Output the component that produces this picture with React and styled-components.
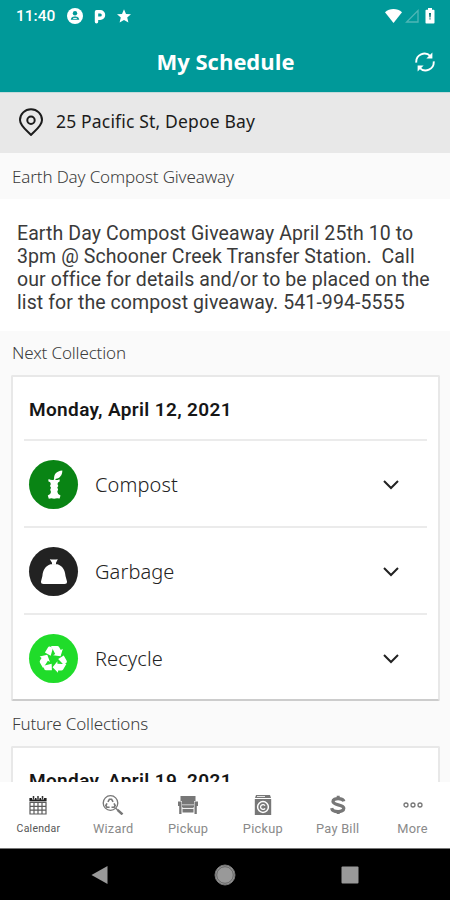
import React, { useState } from "react";
import styled, { createGlobalStyle } from "styled-components";

const GlobalStyle = createGlobalStyle`
  * {
    box-sizing: border-box;
  }
  body {
    margin: 0;
    background: #fafafa;
    font-family: "Noto Sans", "Open Sans", sans-serif;
  }
  svg {
    display: block;
  }
`;

const Screen = styled.div`
  width: 450px;
  height: 900px;
  display: flex;
  flex-direction: column;
  overflow: hidden;
  background: #fafafa;
`;

const StatusBar = styled.div`
  height: 32px;
  flex: none;
  display: flex;
  align-items: center;
  justify-content: space-between;
  padding: 0 15px 0 16px;
  background: #009999;
  color: #fff;
`;

const StatusGroup = styled.div`
  display: flex;
  align-items: center;
  gap: ${(props) => props.$gap};
`;

const Clock = styled.span`
  font-family: Roboto, sans-serif;
  font-size: 15.5px;
  font-weight: 500;
  width: 40px;
  white-space: nowrap;
`;

const Header = styled.header`
  height: 60px;
  flex: none;
  display: grid;
  grid-template-columns: 48px 1fr 48px;
  align-items: center;
  background: #009999;
  color: #fff;
`;

const Title = styled.h1`
  grid-column: 2;
  margin: 0;
  padding: 0 0 2px 1px;
  text-align: center;
  font-family: "Open Sans", sans-serif;
  font-size: 22px;
  font-weight: 700;
  line-height: 30px;
`;

const RefreshButton = styled.button`
  border: none;
  background: none;
  color: #fff;
  padding: 0 0 0 12.5px;
  cursor: pointer;
`;

const Address = styled.div`
  height: 61px;
  flex: none;
  display: flex;
  align-items: center;
  gap: 12px;
  padding: 0 18px 3px;
  background: #e8e8e8;
  border-top: 1px solid #c5dada;
  color: #1c1c1c;
  font-size: 17.5px;
  letter-spacing: 0.17px;
`;

const AddressText = styled.span`
  padding-bottom: 1px;
`;

const Content = styled.main`
  flex: 1;
  min-height: 0;
  overflow: hidden;
`;

const SectionTitle = styled.h2`
  height: ${(props) => props.$height};
  margin: 0;
  padding: 0 12px ${(props) => props.$lift || "0"};
  display: flex;
  align-items: center;
  font-size: 17px;
  font-weight: 300;
  letter-spacing: -0.15px;
  color: #3c3c3c;
`;

const Notice = styled.p`
  height: 132px;
  margin: 0;
  padding: 24px 17px 0;
  background: #fff;
  color: #3a3a3a;
  font-family: Roboto, sans-serif;
  font-size: 19.5px;
  line-height: 22.9px;
  letter-spacing: 0.09px;
  white-space: pre;
`;

const Card = styled.section`
  height: 326px;
  margin: 0 10px 0 11px;
  padding: 0 11px;
  background: #fff;
  border: 2px solid #e8e8e8;
  border-bottom-color: #cccccc;
  border-radius: 2px;
`;

const CardDate = styled.h3`
  height: 62px;
  margin: 0;
  padding: 3px 5px 0;
  display: flex;
  align-items: center;
  color: #161616;
  font-family: Roboto, sans-serif;
  font-size: 19px;
  font-weight: 600;
  letter-spacing: 0.36px;
`;

const Row = styled.div`
  height: 87px;
  display: flex;
  align-items: center;
  padding: 2px 27px 0 5px;
  border-top: 2px solid #ebebeb;
  cursor: pointer;
`;

const Badge = styled.div`
  width: 49px;
  height: 49px;
  flex: none;
  display: flex;
  align-items: center;
  justify-content: center;
  border-radius: 50%;
  background: ${(props) => props.$color};
  color: #fff;
`;

const RowLabel = styled.span`
  flex: 1;
  margin-left: 17px;
  font-size: 20px;
  font-weight: 300;
  letter-spacing: 0.1px;
  color: #222;
`;

const TabBar = styled.nav`
  height: 66px;
  flex: none;
  display: grid;
  grid-template-columns: repeat(6, 1fr);
  padding-left: 1px;
  background: #fff;
`;

const Tab = styled.a`
  display: flex;
  flex-direction: column;
  align-items: center;
  padding-top: 13px;
  gap: 6px;
  color: ${(props) => (props.$active ? "#555" : "#8a8a8a")};
`;

const TabIcon = styled.span`
  height: 20px;
`;

const TabLabel = styled.span`
  font-family: Roboto, sans-serif;
  font-size: ${(props) => (props.$active ? "10.5px" : "12.8px")};
  line-height: 16px;
  letter-spacing: 0.25px;
`;

const NavBar = styled.div`
  height: 52px;
  flex: none;
  display: flex;
  align-items: center;
  justify-content: space-between;
  padding: 0 91px;
  background: #000;
  border-top: 1px solid #777;
`;

const PersonIcon = () => (
  <svg width="16" height="16" viewBox="0 0 16 16">
    <circle cx="8" cy="8" r="8" fill="#fff" />
    <circle cx="8" cy="5.2" r="2.2" fill="#009999" />
    <path d="M3.8 11.8C4 9 6 8.4 8 8.4s4 .6 4.2 3.4z" fill="#009999" />
    <path d="M6.2 10.4h3.6" stroke="#fff" strokeWidth="1" />
  </svg>
);

const ParkingIcon = () => (
  <svg width="12" height="15" viewBox="0 0 12 15">
    <path d="M2.5 12.800V2.800H6.300a3.200 3.200 0 0 1 0 6.400H4.500" fill="none" stroke="#fff" strokeWidth="3.400" strokeLinecap="round" strokeLinejoin="round" />
  </svg>
);

const StarIcon = () => (
  <svg width="14" height="14" viewBox="0 0 14 14">
    <path d="M7 .3l2 4.600 5 .4-3.800 3.300 1.200 4.900L7 10.900l-4.400 2.600 1.200-4.900L0 5.300l5-.4z" fill="#fff" />
  </svg>
);

const WifiIcon = () => (
  <svg width="17" height="14" viewBox="0 0 18 14" preserveAspectRatio="none">
    <path d="M0 3.3C5-1 13-1 18 3.3L9 14z" fill="#fff" />
  </svg>
);

const SignalIcon = () => (
  <svg width="14" height="14" viewBox="0 0 14 14">
    <path d="M13 1.600V13H1.600z" fill="none" stroke="#4fb6b6" strokeWidth="1.300" />
  </svg>
);

const BatteryIcon = () => (
  <svg width="10" height="16" viewBox="0 0 10 16">
    <path d="M3 0h4v1.800h1.700q.8 0 .8.8v12.200q0 .8-.8.8H1.300q-.8 0-.8-.8V2.600q0-.8.8-.8H3z" fill="#fff" />
    <path d="M4 5h2L5.600 9.400H4.400zM4.400 10.200h1.200v1.200H4.400z" fill="#006f6f" />
  </svg>
);

const StatusIcons = styled(StatusGroup)`
  svg:last-child {
    margin-left: 3px;
  }
`;

const RefreshIcon = () => (
  <svg width="20" height="20" viewBox="0 0 20 20" fill="none" stroke="#fff" strokeWidth="1.900">
    <path d="M1.300 10.600A8.200 8.200 0 0 1 15.400 4.200" />
    <path d="M18.700 9.400A8.200 8.200 0 0 1 4.600 15.800" />
    <path d="M17.400.6v6h-6z" fill="#fff" stroke="none" />
    <path d="M2.600 19.400v-6h6z" fill="#fff" stroke="none" />
  </svg>
);

const PinIcon = () => (
  <svg width="26" height="29" viewBox="0 0 26 29" fill="none" stroke="#1c1c1c" strokeWidth="2">
    <path d="M13 28C11 25 2 19.500 2 13a11 10.800 0 0 1 22 0c0 6.500-9 12-11 15z" strokeLinejoin="round" />
    <circle cx="13" cy="13.200" r="3.700" />
  </svg>
);

const ChevronIcon = ({ open }) => (
  <svg width="18" height="11" viewBox="0 0 18 11" fill="none" stroke="#222" strokeWidth="2">
    <path d={open ? "M2 9l7-7 7 7" : "M2 2l7 7 7-7"} />
  </svg>
);

// apple core with a leaf
const CompostIcon = () => (
  <svg width="18" height="30" viewBox="0 0 18 30" fill="#fff">
    <path d="M9.300 9C8.300 4.500 11.500 1 17.300.400 17.600 4.800 14.700 8.200 11 8.800z" />
    <path d="M10.500 7L9.200 11" stroke="#fff" strokeWidth="1.500" />
    <path d="M3.600 9q2.400 1.500 5.400.8 3 .7 5.400-.6l.4 2q-2.300 1-2.300 2.800l.8 1.900-1 1.700.8 2-.8 2.200q.2 2.600 3.200 3.800l-.9 3q-2.800-1-5.500.2-2.700-1.200-5.300-.1l-1-3.100q3-1.200 3.200-3.700l-.8-2.200.8-2-1-1.800.8-2q0-1.800-2.500-2.700z" />
  </svg>
);

const GarbageIcon = () => (
  <svg width="28" height="27" viewBox="0 0 28 27" fill="#fff">
    <path d="M9.800 1.200q4 .8 8 0L16 4.800v2h-4v-2z" />
    <path d="M10.500 6.200h7C22.500 8 25 11.500 25.500 18l1.500 5.500q.2 2.500-2.500 2.500H3.500Q.8 26 1 23.500L2.400 18C3 11.500 5.500 8 10.500 6.200z" />
  </svg>
);

const RecycleIcon = () => (
  <svg width="29" height="29" viewBox="0 0 31 31" fill="#fff">
    {[0, 120, 240].map((angle) => (
      <g key={angle} transform={`rotate(${angle} 15.5 16.5)`}>
        <path d="M11.600 2.800L15 4 12.500 12.500 6.300 9.200 9.400 3.900Q10.200 2.500 11.600 2.800z" />
        <path d="M12.800 2.200h6.800q1.300 0 2 1.200l1.700 2.900 2.200-1.100-2.400 8-8-1.300 2.200-1.300-2.400-4.800z" />
      </g>
    ))}
  </svg>
);

const CalendarIcon = () => (
  <svg width="18" height="20" viewBox="0 0 18 20">
    <path d="M1 7.500h16v11.500H1zM1 11.300h16M1 15.100h16M5 7v12M9 7v12M13 7v12" fill="none" stroke="#5c5c5c" strokeWidth="1.200" />
    <path d="M.4 3h17.200v3.400H.4z" fill="#222" />
    <path d="M4.500 1v3.500M9 1v3.500M13.500 1v3.500" stroke="#fff" strokeWidth="3" />
    <path d="M4.500 1v3.500M9 1v3.500M13.500 1v3.500" stroke="#333" strokeWidth="1.500" />
  </svg>
);

const WizardIcon = () => (
  <svg width="22" height="20" viewBox="0 0 22 20" fill="none" stroke="#777">
    <circle cx="8.500" cy="8" r="7.300" strokeWidth="1.300" />
    <path d="M5.900 6.900L7.400 4.300h2.200l1.500 2.600M12 8.300l1.200 2.200-1 1.700H9.500M7.600 12.200H4.800l-1-1.700L5 8.300" strokeWidth="1.600" />
    <path d="M13.700 13.200l2 1.800" strokeWidth="1.300" />
    <path d="M15.500 14.800l5 4.600" strokeWidth="2.500" />
  </svg>
);

const ChairIcon = () => (
  <svg width="20" height="20" viewBox="0 0 20 20" fill="#777">
    <path d="M2.500 1h15v5H16v6H4V6H2.500z" />
    <path d="M0 6.500h3.500V19H1.200v-8H0zM20 6.500h-3.500V19h2.300v-8H20z" />
    <path d="M4.500 11h11v2h-11zM4.500 14h11v3.500h-11z" />
    <path d="M4 9.800h12M4 13.400h12" stroke="#e8e8e8" strokeWidth=".8" />
  </svg>
);

const WasherIcon = () => (
  <svg width="18" height="20" viewBox="0 0 18 20" fill="none" stroke="#fff">
    <path d="M2 0h14l1 3H1zM.8 4h16.400v16H.8z" fill="#777" stroke="none" />
    <path d="M3 1.500h8" strokeWidth=".8" />
    <circle cx="9" cy="12" r="5.400" strokeWidth="1.500" />
    <path d="M11 10.700a2.400 2.400 0 1 0 0 2.600" strokeWidth="1.300" />
  </svg>
);

const DollarIcon = () => (
  <svg width="16" height="20" viewBox="0 0 16 20" fill="none" stroke="#777">
    <path d="M13.800 6.400C13 2.700 3 2.400 3 6.600c0 4 10.800 2.400 10.800 6.700 0 4.500-11.200 4.400-12.200-.2" strokeWidth="3.300" />
    <path d="M8.200.8v3M8.200 16v3" strokeWidth="3" />
  </svg>
);

const MoreIcon = () => (
  <svg width="20" height="20" viewBox="0 0 20 20" fill="none" stroke="#777" strokeWidth="1.300">
    <circle cx="3" cy="10" r="2" />
    <circle cx="10" cy="10" r="2" />
    <circle cx="17" cy="10" r="2" />
  </svg>
);

const collections = [
  { name: "Compost", color: "#098414", icon: <CompostIcon /> },
  { name: "Garbage", color: "#222222", icon: <GarbageIcon /> },
  { name: "Recycle", color: "#20dc2a", icon: <RecycleIcon /> },
];

const tabs = [
  { label: "Calendar", icon: <CalendarIcon /> },
  { label: "Wizard", icon: <WizardIcon /> },
  { label: "Pickup", icon: <ChairIcon /> },
  { label: "Pickup", icon: <WasherIcon /> },
  { label: "Pay Bill", icon: <DollarIcon /> },
  { label: "More", icon: <MoreIcon /> },
];

const CollectionCard = ({ date, items = [] }) => {
  const [open, setOpen] = useState(null);

  return (
    <Card>
      <CardDate>{date}</CardDate>
      {items.map((item) => (
        <Row key={item.name} onClick={() => setOpen(open === item.name ? null : item.name)}>
          <Badge $color={item.color}>{item.icon}</Badge>
          <RowLabel>{item.name}</RowLabel>
          <ChevronIcon open={open === item.name} />
        </Row>
      ))}
    </Card>
  );
};

const App = () => {
  const [active, setActive] = useState(0);

  return (
    <Screen>
      <GlobalStyle />
      <StatusBar>
        <StatusGroup $gap="11px">
          <Clock>11:40</Clock>
          <PersonIcon />
          <ParkingIcon />
          <StarIcon />
        </StatusGroup>
        <StatusIcons $gap="3px">
          <WifiIcon />
          <SignalIcon />
          <BatteryIcon />
        </StatusIcons>
      </StatusBar>
      <Header>
        <Title>My Schedule</Title>
        <RefreshButton>
          <RefreshIcon />
        </RefreshButton>
      </Header>
      <Address>
        <PinIcon />
        <AddressText>25 Pacific St, Depoe Bay</AddressText>
      </Address>
      <Content>
        <SectionTitle $height="46px">Earth Day Compost Giveaway</SectionTitle>
        <Notice>
          {"Earth Day Compost Giveaway April 25th 10 to\n3pm @ Schooner Creek Transfer Station.  Call\nour office for details and/or to be placed on the\nlist for the compost giveaway. 541-994-5555"}
        </Notice>
        {/* Next pickup */}
        <SectionTitle $height="44px" $lift="1px">Next Collection</SectionTitle>
        <CollectionCard date="Monday, April 12, 2021" items={collections} />
        {/* Later pickups */}
        <SectionTitle $height="45px">Future Collections</SectionTitle>
        <CollectionCard date="Monday, April 19, 2021" />
      </Content>
      <TabBar>
        {tabs.map((tab, i) => (
          <Tab key={i} $active={i === active} onClick={() => setActive(i)}>
            <TabIcon>{tab.icon}</TabIcon>
            <TabLabel $active={i === active}>{tab.label}</TabLabel>
          </Tab>
        ))}
      </TabBar>
      <NavBar>
        <svg width="17" height="20" viewBox="0 0 17 20">
          <path d="M16.500 1v18L.5 10z" fill="#999" />
        </svg>
        <svg width="22" height="22" viewBox="0 0 22 22">
          <circle cx="11" cy="11" r="10" fill="#999" stroke="#777" strokeWidth="1" />
          <circle cx="11" cy="11" r="8.300" fill="none" stroke="#666" strokeWidth="1" />
        </svg>
        <svg width="18" height="18" viewBox="0 0 18 18">
          <rect x=".5" y=".5" width="17" height="17" rx="1" fill="#999" />
        </svg>
      </NavBar>
    </Screen>
  );
};

export default App;
